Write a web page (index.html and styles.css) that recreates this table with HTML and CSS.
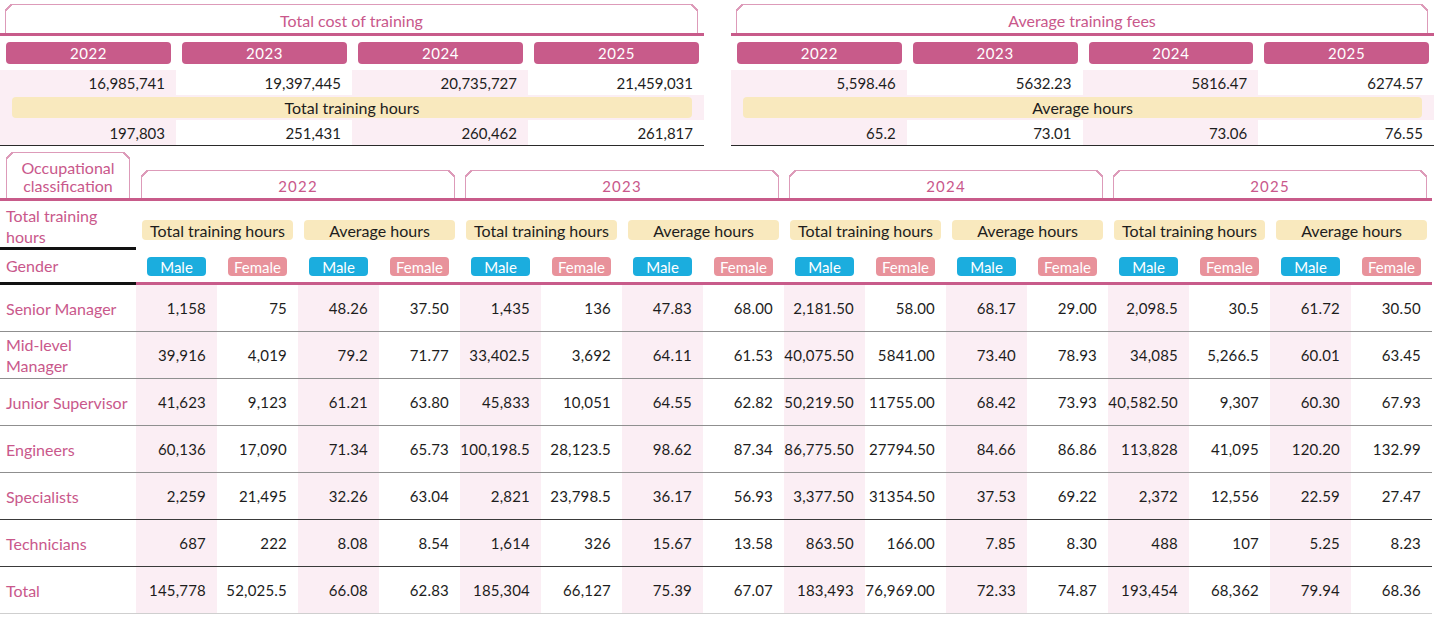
FILE: index.html
```html
<!DOCTYPE html>
<html lang="en">
<head>
<meta charset="utf-8">
<title>Training statistics</title>
<link rel="stylesheet" href="styles.css">
</head>
<body>
<div class="page">
  <div class="summary">
    <section class="panel">
      <div class="panel-head"><div class="tab tab-wide">Total cost of training</div></div>
      <div class="years">
        <div class="ycell"><span class="ypill">2022</span></div>
        <div class="ycell"><span class="ypill">2023</span></div>
        <div class="ycell"><span class="ypill">2024</span></div>
        <div class="ycell"><span class="ypill">2025</span></div>
      </div>
      <div class="vals">
        <div class="v m">16,985,741</div><div class="v">19,397,445</div><div class="v m">20,735,727</div><div class="v">21,459,031</div>
      </div>
      <div class="subrow"><div class="subpill">Total training hours</div></div>
      <div class="vals last">
        <div class="v m">197,803</div><div class="v">251,431</div><div class="v m">260,462</div><div class="v">261,817</div>
      </div>
    </section>
    <section class="panel">
      <div class="panel-head"><div class="tab tab-wide">Average training fees</div></div>
      <div class="years">
        <div class="ycell"><span class="ypill">2022</span></div>
        <div class="ycell"><span class="ypill">2023</span></div>
        <div class="ycell"><span class="ypill">2024</span></div>
        <div class="ycell"><span class="ypill">2025</span></div>
      </div>
      <div class="vals">
        <div class="v m">5,598.46</div><div class="v">5632.23</div><div class="v m">5816.47</div><div class="v">6274.57</div>
      </div>
      <div class="subrow"><div class="subpill">Average hours</div></div>
      <div class="vals last">
        <div class="v m">65.2</div><div class="v">73.01</div><div class="v m">73.06</div><div class="v">76.55</div>
      </div>
    </section>
  </div>

  <div class="grid">
    <div class="ghead">
      <div class="tab tab-occ">Occupational<br>classification</div>
      <div class="tab tab-year">2022</div>
      <div class="tab tab-year">2023</div>
      <div class="tab tab-year">2024</div>
      <div class="tab tab-year">2025</div>
    </div>

    <div class="grow cat">
      <div class="lbl lbl-two">Total training<br>hours</div>
      <div class="catc"><span class="catpill">Total training hours</span></div>
      <div class="catc"><span class="catpill">Average hours</span></div>
      <div class="catc"><span class="catpill">Total training hours</span></div>
      <div class="catc"><span class="catpill">Average hours</span></div>
      <div class="catc"><span class="catpill">Total training hours</span></div>
      <div class="catc"><span class="catpill">Average hours</span></div>
      <div class="catc"><span class="catpill">Total training hours</span></div>
      <div class="catc"><span class="catpill">Average hours</span></div>
    </div>

    <div class="grow gender">
      <div class="lbl">Gender</div>
      <div class="gc"><span class="gp male">Male</span></div><div class="gc"><span class="gp female">Female</span></div>
      <div class="gc"><span class="gp male">Male</span></div><div class="gc"><span class="gp female">Female</span></div>
      <div class="gc"><span class="gp male">Male</span></div><div class="gc"><span class="gp female">Female</span></div>
      <div class="gc"><span class="gp male">Male</span></div><div class="gc"><span class="gp female">Female</span></div>
      <div class="gc"><span class="gp male">Male</span></div><div class="gc"><span class="gp female">Female</span></div>
      <div class="gc"><span class="gp male">Male</span></div><div class="gc"><span class="gp female">Female</span></div>
      <div class="gc"><span class="gp male">Male</span></div><div class="gc"><span class="gp female">Female</span></div>
      <div class="gc"><span class="gp male">Male</span></div><div class="gc"><span class="gp female">Female</span></div>
    </div>

    <div class="grow data soft">
      <div class="lbl">Senior Manager</div>
      <div class="d m">1,158</div><div class="d">75</div><div class="d m">48.26</div><div class="d">37.50</div>
      <div class="d m">1,435</div><div class="d">136</div><div class="d m">47.83</div><div class="d">68.00</div>
      <div class="d m">2,181.50</div><div class="d">58.00</div><div class="d m">68.17</div><div class="d">29.00</div>
      <div class="d m">2,098.5</div><div class="d">30.5</div><div class="d m">61.72</div><div class="d">30.50</div>
    </div>
    <div class="grow data soft">
      <div class="lbl lbl-two">Mid-level<br>Manager</div>
      <div class="d m">39,916</div><div class="d">4,019</div><div class="d m">79.2</div><div class="d">71.77</div>
      <div class="d m">33,402.5</div><div class="d">3,692</div><div class="d m">64.11</div><div class="d">61.53</div>
      <div class="d m">40,075.50</div><div class="d">5841.00</div><div class="d m">73.40</div><div class="d">78.93</div>
      <div class="d m">34,085</div><div class="d">5,266.5</div><div class="d m">60.01</div><div class="d">63.45</div>
    </div>
    <div class="grow data soft">
      <div class="lbl">Junior Supervisor</div>
      <div class="d m">41,623</div><div class="d">9,123</div><div class="d m">61.21</div><div class="d">63.80</div>
      <div class="d m">45,833</div><div class="d">10,051</div><div class="d m">64.55</div><div class="d">62.82</div>
      <div class="d m">50,219.50</div><div class="d">11755.00</div><div class="d m">68.42</div><div class="d">73.93</div>
      <div class="d m">40,582.50</div><div class="d">9,307</div><div class="d m">60.30</div><div class="d">67.93</div>
    </div>
    <div class="grow data soft">
      <div class="lbl">Engineers</div>
      <div class="d m">60,136</div><div class="d">17,090</div><div class="d m">71.34</div><div class="d">65.73</div>
      <div class="d m">100,198.5</div><div class="d">28,123.5</div><div class="d m">98.62</div><div class="d">87.34</div>
      <div class="d m">86,775.50</div><div class="d">27794.50</div><div class="d m">84.66</div><div class="d">86.86</div>
      <div class="d m">113,828</div><div class="d">41,095</div><div class="d m">120.20</div><div class="d">132.99</div>
    </div>
    <div class="grow data">
      <div class="lbl">Specialists</div>
      <div class="d m">2,259</div><div class="d">21,495</div><div class="d m">32.26</div><div class="d">63.04</div>
      <div class="d m">2,821</div><div class="d">23,798.5</div><div class="d m">36.17</div><div class="d">56.93</div>
      <div class="d m">3,377.50</div><div class="d">31354.50</div><div class="d m">37.53</div><div class="d">69.22</div>
      <div class="d m">2,372</div><div class="d">12,556</div><div class="d m">22.59</div><div class="d">27.47</div>
    </div>
    <div class="grow data">
      <div class="lbl">Technicians</div>
      <div class="d m">687</div><div class="d">222</div><div class="d m">8.08</div><div class="d">8.54</div>
      <div class="d m">1,614</div><div class="d">326</div><div class="d m">15.67</div><div class="d">13.58</div>
      <div class="d m">863.50</div><div class="d">166.00</div><div class="d m">7.85</div><div class="d">8.30</div>
      <div class="d m">488</div><div class="d">107</div><div class="d m">5.25</div><div class="d">8.23</div>
    </div>
    <div class="grow data total">
      <div class="lbl">Total</div>
      <div class="d m">145,778</div><div class="d">52,025.5</div><div class="d m">66.08</div><div class="d">62.83</div>
      <div class="d m">185,304</div><div class="d">66,127</div><div class="d m">75.39</div><div class="d">67.07</div>
      <div class="d m">183,493</div><div class="d">76,969.00</div><div class="d m">72.33</div><div class="d">74.87</div>
      <div class="d m">193,454</div><div class="d">68,362</div><div class="d m">79.94</div><div class="d">68.36</div>
    </div>
  </div>
</div>
</body>
</html>
```

FILE: styles.css
```css
* { box-sizing: border-box; }
html, body { margin: 0; padding: 0; background: #fff; }
body {
  font-family: Lato, "Open Sans", "Liberation Sans", sans-serif;
  font-size: 15px;
  color: #1d1d1d;
}
.page { width: 1440px; }

/* ---------- summary panels ---------- */
.summary {
  display: flex;
  gap: 27px;
  width: 1434px;
}
.panel { flex: 0 0 704px; }
.panel + .panel { flex-basis: 703px; }

.panel-head {
  padding: 4px 6px 0 5px;
  border-bottom: 3px solid #c85b8a;
}

.tab {
  position: relative;
  border: 1px solid #dd9bb9;
  border-bottom: none;
  color: #c9588b;
  text-align: center;
  background: #fff;
}
.tab::before,
.tab::after {
  content: "";
  position: absolute;
  top: -1px;
  width: 7px;
  height: 7px;
}
.tab::before {
  left: -1px;
  background: linear-gradient(135deg, #fff 0 calc(50% - 0.8px), #dd9bb9 calc(50% - 0.8px) calc(50% + 0.8px), transparent calc(50% + 0.8px));
}
.tab::after {
  right: -1px;
  background: linear-gradient(225deg, #fff 0 calc(50% - 0.8px), #dd9bb9 calc(50% - 0.8px) calc(50% + 0.8px), transparent calc(50% + 0.8px));
}
.tab-wide {
  height: 29px;
  line-height: 32px;
  font-size: 16px;
}

.years {
  display: grid;
  grid-template-columns: repeat(4, 1fr);
  padding: 6px 0 6px;
}
.ycell { padding: 0 5px 0 6px; }
.ypill {
  display: block;
  height: 22px;
  line-height: 22px;
  background: #c85b8a;
  color: #fff;
  border-radius: 4px;
  text-align: center;
  letter-spacing: 0.6px;
}

.vals {
  display: grid;
  grid-template-columns: repeat(4, 1fr);
}
.vals.last { border-bottom: 1px solid #2a2a2a; }
.v {
  height: 25px;
  line-height: 26px;
  text-align: right;
  padding-right: 11px;
}
.v.m { background: #fbeef4; }

.subrow {
  background: #fbeef4;
  padding: 2px 12px;
}
.subpill {
  height: 21px;
  line-height: 22px;
  background: #f9e9be;
  border-radius: 4px;
  text-align: center;
  font-size: 16px;
}

/* ---------- main grid ---------- */
.grid { width: 1432px; }

.ghead,
.grow {
  display: grid;
  grid-template-columns: 136px repeat(16, 81px);
}
.ghead {
  padding-top: 6px;
  border-bottom: 3px solid #c85b8a;
  align-items: end;
}
.tab-occ {
  margin: 0 6px 0 6px;
  height: 46px;
  padding-top: 6px;
  line-height: 18px;
  font-size: 16px;
}
.tab-year {
  grid-column: span 4;
  margin: 0 5px;
  height: 28px;
  line-height: 31px;
  font-size: 15px;
  letter-spacing: 1.2px;
}

.lbl {
  color: #c9588b;
  padding-left: 6px;
  display: flex;
  align-items: center;
  line-height: 21px;
  font-size: 16px;
}

/* category row */
.grow.cat { height: 48px; }
.grow.cat .lbl {
  border-bottom: 3px solid #111;
  align-items: flex-start;
  padding-top: 4px;
}
.catc {
  grid-column: span 2;
  padding: 19px 5px 0 6px;
}
.catpill {
  display: block;
  height: 20px;
  line-height: 21px;
  background: #f9e9be;
  border-radius: 4px;
  text-align: center;
  font-size: 16px;
}

/* gender row */
.grow.gender { height: 36px; }
.grow.gender .lbl { border-bottom: 3px solid #111; }
.gc {
  border-bottom: 3px solid #c85b8a;
  display: flex;
  align-items: center;
  justify-content: center;
  padding-top: 1px;
}
.gp {
  width: 59px;
  height: 19px;
  line-height: 20px;
  border-radius: 4px;
  color: #fff;
  text-align: center;
}
.gp.male { background: #1badde; }
.gp.female { background: #e8929b; }

/* data rows */
.grow.data {
  height: 47px;
  border-bottom: 1px solid #3a3a3a;
}
.grow.data.soft { border-bottom-color: #8f8f8f; }
.grow.data.total { border-bottom-color: #cfcfcf; }
.d {
  display: flex;
  align-items: center;
  justify-content: flex-end;
  padding-right: 11px;
  letter-spacing: 0.2px;
}
.d.m { background: #fbeef4; }
```
